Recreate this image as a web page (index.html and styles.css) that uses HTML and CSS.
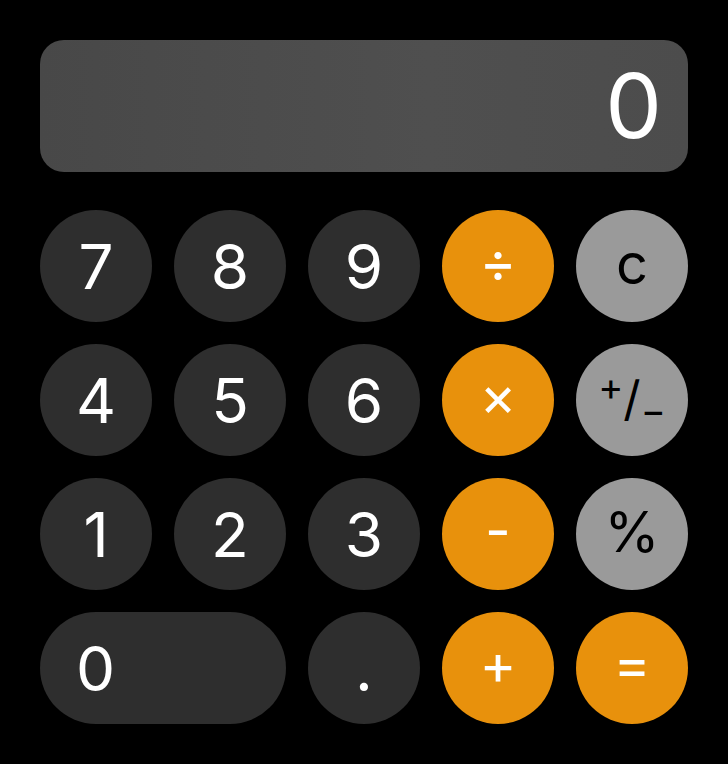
FILE: index.html
```html
<!DOCTYPE html>
<html lang="en">

<head>
	<meta charset="UTF-8">
	<meta name="viewport"
				content="width=device-width, initial-scale=1.0">
	<title>Calculator</title>
	<link rel="stylesheet" href="styles.css">
</head>

<body>
	<div class="calculator">
		<div class="display" id="display">0</div>
		<div class="keys">
			<button class="key num">7</button>
			<button class="key num">8</button>
			<button class="key num">9</button>
			<button class="key op">÷</button>
			<button class="key fn">c</button>

			<button class="key num">4</button>
			<button class="key num">5</button>
			<button class="key num">6</button>
			<button class="key op">×</button>
			<button class="key fn sign"><span class="sup">+</span>/<span class="sub">−</span></button>

			<button class="key num">1</button>
			<button class="key num">2</button>
			<button class="key num">3</button>
			<button class="key op minus">-</button>
			<button class="key fn">%</button>

			<button class="key num zero">0</button>
			<button class="key num dot">.</button>
			<button class="key op">+</button>
			<button class="key op">=</button>
		</div>
	</div>
</body>

</html>
```

FILE: styles.css
```css
* {
	box-sizing: border-box;
}

body {
	background-color: #000;
	margin: 0;
	font-family: "Inter", "Liberation Sans", sans-serif;
}

.calculator {
	padding: 40px;
	width: 728px;
}

.display {
	background-color: #4d4d4d;
	background-image: linear-gradient(90deg, #484848 0%, #4f4f4f 60%, #4c4c4c 100%);
	border-radius: 24px;
	color: #fff;
	font-size: 90px;
	font-weight: 400;
	height: 132px;
	line-height: 132px;
	padding: 0 26px;
	text-align: right;
	margin-bottom: 38px;
}

.keys {
	display: grid;
	grid-template-columns: repeat(5, 112px);
	grid-auto-rows: 112px;
	gap: 22px;
}

.key {
	border: none;
	border-radius: 56px;
	font-family: inherit;
	font-size: 62px;
	font-weight: 400;
	padding: 0;
	display: flex;
	align-items: center;
	justify-content: center;
	cursor: pointer;
}

.num {
	background-color: #2e2e2e;
	color: #fff;
}

.op {
	background-color: #e8910c;
	color: #fff;
	font-size: 56px;
	padding-bottom: 8px;
}

.fn {
	background-color: #9a9a9a;
	color: #000;
	font-size: 56px;
	padding-bottom: 4px;
}

.sign {
	font-size: 48px;
}

.sign .sup {
	font-size: 38px;
	position: relative;
	top: -12px;
}

.sign .sub {
	font-size: 38px;
	position: relative;
	top: 12px;
}

.zero {
	grid-column: span 2;
	justify-content: flex-start;
	padding-left: 36px;
}

.dot {
	align-items: flex-end;
	padding-bottom: 18px;
}
```
